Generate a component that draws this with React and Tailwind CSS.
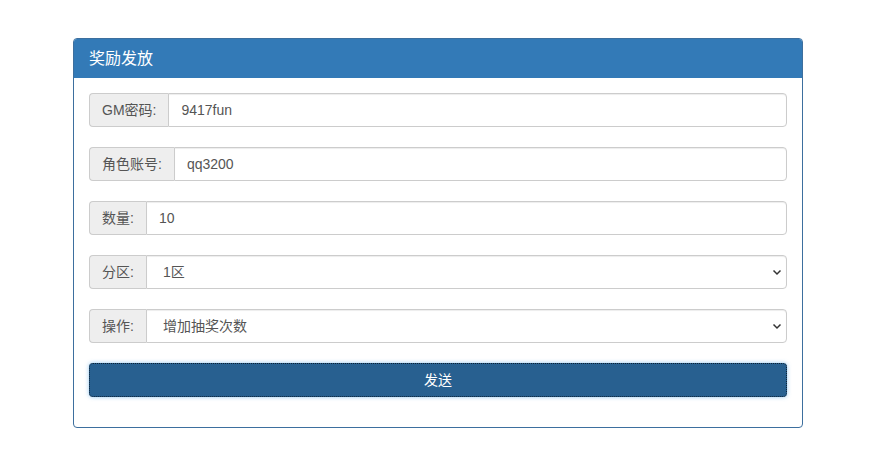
import React from "react";

const font = { fontFamily: '"Liberation Sans", "Noto Sans CJK SC", Arial, sans-serif' };

function Label({ children }) {
  return (
    <span className="flex items-center h-[34px] px-3 bg-[#eeeeee] border border-[#cccccc] border-r-0 rounded-l-[4px] text-[14px] text-[#555555] whitespace-nowrap">
      {children}
    </span>
  );
}

function TextRow({ label, value }) {
  return (
    <div className="flex w-full">
      <Label>{label}</Label>
      <input
        defaultValue={value}
        className="flex-1 min-w-0 h-[34px] px-3 border border-[#cccccc] rounded-r-[4px] text-[14px] text-[#555555] bg-white shadow-[inset_0_1px_1px_rgba(0,0,0,0.075)] outline-none"
        style={font}
      />
    </div>
  );
}

function SelectRow({ label, value, options }) {
  return (
    <div className="flex w-full">
      <Label>{label}</Label>
      <div className="relative flex-1 min-w-0">
        <select
          defaultValue={value}
          className="appearance-none w-full h-[34px] pl-4 pr-8 border border-[#cccccc] rounded-r-[4px] text-[14px] text-[#555555] bg-white shadow-[inset_0_1px_1px_rgba(0,0,0,0.075)] outline-none"
          style={font}
        >
          {options.map((o) => (
            <option key={o}>{o}</option>
          ))}
        </select>
        <svg
          className="pointer-events-none absolute right-[5px] top-1/2 -translate-y-1/2"
          width="10"
          height="10"
          viewBox="0 0 10 10"
        >
          <path d="M1.5 3.5 L5 7 L8.5 3.5" fill="none" stroke="#333" strokeWidth="1.5" />
        </svg>
      </div>
    </div>
  );
}

export default function App() {
  return (
    <div className="w-[876px] h-[460px] bg-white" style={font}>
      <div className="pt-[38px]">
        <div className="mx-auto w-[730px] border border-[#3d6f9e] rounded-[4px] bg-white">
          <div className="h-[39px] bg-[#337ab7] px-[15px] flex items-center text-white text-[16px] rounded-t-[3px]">
            奖励发放
          </div>
          <div className="px-[15px] pt-[15px] pb-[30px] flex flex-col gap-5">
            <TextRow label="GM密码:" value="9417fun" />
            <TextRow label="角色账号:" value="qq3200" />
            <TextRow label="数量:" value="10" />
            <SelectRow label="分区:" value="1区" options={["1区", "2区", "3区"]} />
            <SelectRow label="操作:" value="增加抽奖次数" options={["增加抽奖次数", "发放道具"]} />
            <button
              className="w-full h-[34px] bg-[#286090] border border-dotted border-[#0d2236] rounded-[4px] text-white text-[14px] shadow-[0_0_4px_rgba(102,175,233,0.7)]"
              style={font}
            >
              发送
            </button>
          </div>
        </div>
      </div>
    </div>
  );
}
